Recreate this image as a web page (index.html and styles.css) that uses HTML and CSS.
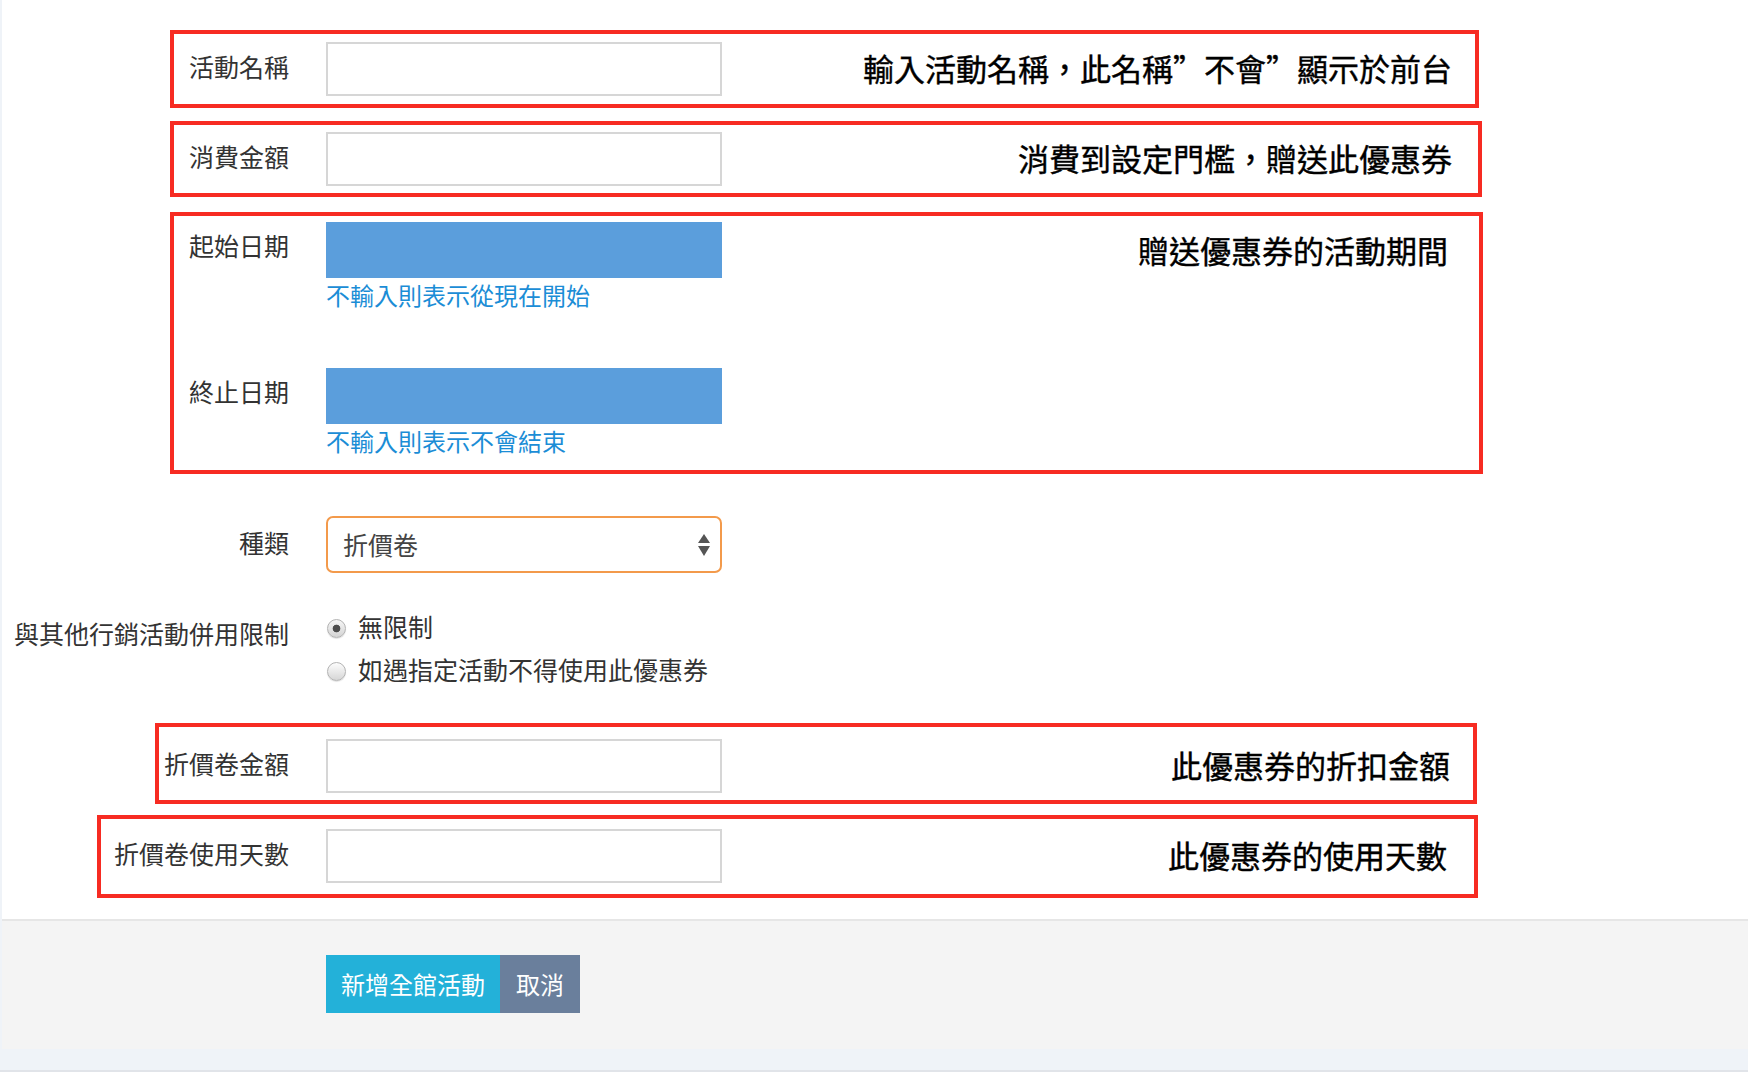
FILE: index.html
```html
<!DOCTYPE html>
<html lang="zh-Hant">
<head>
<meta charset="utf-8">
<title>新增全館活動</title>
<link rel="stylesheet" href="styles.css">
</head>
<body>
<div class="panel">
  <div class="form">
    <div class="box b-name">
      <div class="row">
        <label class="label">活動名稱</label>
        <input class="text-input" type="text">
      </div>
      <div class="note">輸入活動名稱，此名稱”不會”顯示於前台</div>
    </div>

    <div class="box b-spend">
      <div class="row">
        <label class="label">消費金額</label>
        <input class="text-input" type="text">
      </div>
      <div class="note">消費到設定門檻，贈送此優惠券</div>
    </div>

    <div class="box b-period">
      <div class="date-rows">
        <div class="row top">
          <label class="label date-label">起始日期</label>
          <div class="field">
            <div class="date-input"></div>
            <div class="help">不輸入則表示從現在開始</div>
          </div>
        </div>
        <div class="row top">
          <label class="label date-label">終止日期</label>
          <div class="field">
            <div class="date-input"></div>
            <div class="help">不輸入則表示不會結束</div>
          </div>
        </div>
      </div>
      <div class="note note-top">贈送優惠券的活動期間</div>
    </div>

    <div class="row plain select-row">
      <label class="label">種類</label>
      <div class="select">
        <span>折價卷</span>
        <svg class="arrows" width="12" height="22" viewBox="0 0 12 22"><polygon points="0,9 6,0 12,9" fill="#555"/><polygon points="0,12 6,22 12,12" fill="#555"/></svg>
      </div>
    </div>

    <div class="row plain top radio-row">
      <label class="label radio-label">與其他行銷活動併用限制</label>
      <div class="options">
        <label class="option"><input type="radio" name="limit" checked><span>無限制</span></label>
        <label class="option"><input type="radio" name="limit"><span>如遇指定活動不得使用此優惠券</span></label>
      </div>
    </div>

    <div class="box b-amount">
      <div class="row">
        <label class="label">折價卷金額</label>
        <input class="text-input" type="text">
      </div>
      <div class="note">此優惠券的折扣金額</div>
    </div>

    <div class="box b-days">
      <div class="row">
        <label class="label">折價卷使用天數</label>
        <input class="text-input" type="text">
      </div>
      <div class="note">此優惠券的使用天數</div>
    </div>
  </div>

  <div class="footer">
    <button class="btn btn-primary" type="button">新增全館活動</button>
    <button class="btn btn-cancel" type="button">取消</button>
  </div>
</div>
<div class="page-end"></div>
</body>
</html>
```

FILE: styles.css
```css
* { box-sizing: border-box; }

html, body {
  margin: 0;
  padding: 0;
}

body {
  width: 1748px;
  height: 1072px;
  overflow: hidden;
  background: #eff3f8;
  font-family: "Noto Sans CJK TC", "Noto Sans", sans-serif;
  color: #333;
}

.panel {
  margin-left: 2px;
  background: #fff;
}

.form {
  padding: 30px 0 21px;
}

/* annotation boxes */
.box {
  display: flex;
  align-items: center;
  border: 4px solid #f72b22;
  --lw: 115px;
}

.b-name {
  margin-left: 168px;
  width: 1309px;
  padding: 8px 23px 8px 0;
}

.b-spend {
  margin-top: 13px;
  margin-left: 168px;
  width: 1312px;
  padding: 7px 26px 7px 0;
}

.b-period {
  margin-top: 15px;
  margin-left: 168px;
  width: 1313px;
  padding: 6px 31px 14px 0;
  align-items: flex-start;
}

.b-amount {
  margin-top: 34px;
  margin-left: 153px;
  width: 1322px;
  padding: 12px 23px 7px 0;
  --lw: 130px;
}

.b-days {
  margin-top: 11px;
  margin-left: 95px;
  width: 1381px;
  padding: 10px 27px 11px 0;
  --lw: 188px;
}

.note {
  margin-left: auto;
  padding-bottom: 2px;
  font-size: 31px;
  line-height: 40px;
  font-weight: 400;
  color: #000;
  white-space: nowrap;
  -webkit-text-stroke: 0.4px #000;
}

.note-top {
  margin-top: 8px;
}

/* rows */
.row {
  display: flex;
  align-items: center;
}

.row.top {
  align-items: flex-start;
}

.plain {
  --lw: 287px;
}

.label {
  flex: none;
  width: var(--lw);
  margin-right: 37px;
  padding-bottom: 6px;
  text-align: right;
  font-size: 25px;
  line-height: 36px;
  color: #333;
  white-space: nowrap;
}

.text-input {
  display: block;
  width: 396px;
  height: 54px;
  margin: 0;
  padding: 0 12px;
  border: 2px solid #d6d6d6;
  border-radius: 0;
  background: #fff;
  outline: none;
  font: inherit;
}

/* dates */
.date-rows {
  display: flex;
  flex-direction: column;
  gap: 58px;
}

.date-label {
  padding-bottom: 0;
  line-height: 46px;
}

.field {
  display: flex;
  flex-direction: column;
}

.date-input {
  width: 396px;
  height: 56px;
  background: #5b9edc;
}

.help {
  margin-top: 2px;
  font-size: 24px;
  line-height: 30px;
  color: #1b8dd6;
}

/* select */
.select-row {
  margin-top: 42px;
}

.select {
  display: flex;
  align-items: center;
  justify-content: space-between;
  width: 396px;
  height: 57px;
  padding: 0 10px 0 15px;
  border: 2px solid #f39a4b;
  border-radius: 7px;
  background: #fff;
  font-size: 25px;
  line-height: 36px;
  color: #444;
}

.select span {
  padding-bottom: 2px;
}

.arrows {
  display: block;
  flex: none;
}

/* radios */
.radio-row {
  margin-top: 37px;
}

.radio-label {
  margin-top: 5px;
  padding-bottom: 0;
}

.options {
  display: flex;
  flex-direction: column;
  gap: 7px;
}

.option {
  display: flex;
  align-items: center;
  gap: 12px;
  height: 36px;
  font-size: 25px;
  line-height: 36px;
  color: #333;
}

.option span {
  padding-bottom: 4px;
}

.option input {
  appearance: none;
  -webkit-appearance: none;
  flex: none;
  width: 19px;
  height: 19px;
  margin: 0 0 0 1px;
  border: 1px solid #b3b3b3;
  border-radius: 50%;
  background: linear-gradient(#fdfdfd, #d6d6d6);
  box-shadow: 0 1px 1px rgba(0, 0, 0, 0.12);
}

.option input:checked {
  background:
    radial-gradient(circle, #4d4d4d 0 3.5px, transparent 4.2px),
    linear-gradient(#f6f6f6, #d4d4d4);
}

/* footer */
.footer {
  display: flex;
  border-top: 2px solid #e6e6e6;
  background: #f4f4f4;
  padding: 34px 0 36px 324px;
}

.btn {
  height: 58px;
  margin: 0;
  padding-bottom: 3px;
  border: none;
  border-radius: 0;
  font-family: inherit;
  font-size: 24px;
  line-height: 55px;
  color: #fff;
  cursor: pointer;
}

.btn-primary {
  padding-left: 15px;
  padding-right: 15px;
  background: #23b1d9;
}

.btn-cancel {
  padding-left: 16px;
  padding-right: 16px;
  background: #6a7f9c;
}

.page-end {
  height: 24px;
  border-bottom: 3px solid #e1e4e9;
}
```
